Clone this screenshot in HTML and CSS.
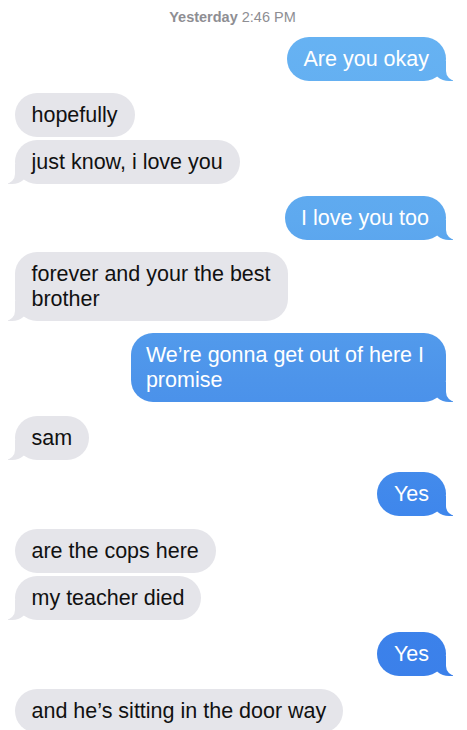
FILE: index.html
```html
<!DOCTYPE html>
<html lang="en">
<head>
<meta charset="utf-8">
<title>Messages</title>
<link rel="stylesheet" href="styles.css">
</head>
<body>
<main class="chat">
  <div class="stamp"><b>Yesterday</b> 2:46 PM</div>

  <div class="msg out tail">Are you okay</div>

  <div class="msg in group">hopefully</div>
  <div class="msg in tail cont">just know, i love you</div>

  <div class="msg out tail">I love you too</div>

  <div class="msg in tail">forever and your the best<br>brother</div>

  <div class="msg out tail wide">We’re gonna get out of here I<br>promise</div>

  <div class="msg in tail apart">sam</div>

  <div class="msg out tail">Yes</div>

  <div class="msg in group loose">are the cops here</div>
  <div class="msg in tail cont">my teacher died</div>

  <div class="msg out tail">Yes</div>

  <div class="msg in loose">and he’s sitting in the door way</div>
</main>
</body>
</html>
```

FILE: styles.css
```css
html, body {
  margin: 0;
  padding: 0;
  background: #ffffff;
  overflow: hidden;
}

.chat {
  display: flex;
  flex-direction: column;
  padding: 7px 21px 0 15px;
  font-family: "Liberation Sans", Arial, sans-serif;
}

.stamp {
  align-self: center;
  margin-left: 4px;
  font-size: 14.5px;
  line-height: 20px;
  color: #8e8e93;
}

.stamp b {
  font-weight: 700;
}

.msg {
  position: relative;
  font-size: 21.5px;
  line-height: 25px;
  padding: 9.5px 17px 9.5px 16.5px;
  border-radius: 22px;
  margin-top: 12px;
  max-width: 340px;
}

.stamp + .msg {
  margin-top: 10px;
}

.msg.cont {
  margin-top: 3px;
}

.msg.apart {
  margin-top: 14px;
}

.msg.loose {
  margin-top: 13px;
}

.msg.in {
  align-self: flex-start;
  background: #e5e5ea;
  color: #111111;
}

.msg.out {
  align-self: flex-end;
  color: #ffffff;
  background: linear-gradient(to bottom, #68b4f3 0px, #5ea9ef 220px, #4d94ea 380px, #3e86ec 520px, #3a7ee9 730px) fixed;
}

.msg.wide {
  padding-left: 15px;
  padding-right: 22px;
}

.msg.tail::before,
.msg.tail::after {
  content: "";
  position: absolute;
  bottom: 0;
  height: 20px;
}

.msg.out.tail::before {
  right: -7px;
  width: 20px;
  background: linear-gradient(to bottom, #68b4f3 0px, #5ea9ef 220px, #4d94ea 380px, #3e86ec 520px, #3a7ee9 730px) fixed;
  border-bottom-left-radius: 16px 14px;
}

.msg.out.tail::after {
  right: -10px;
  width: 10px;
  background: #ffffff;
  border-bottom-left-radius: 10px;
}

.msg.in.tail::before {
  left: -7px;
  width: 20px;
  background: #e5e5ea;
  border-bottom-right-radius: 16px 14px;
}

.msg.in.tail::after {
  left: -10px;
  width: 10px;
  background: #ffffff;
  border-bottom-right-radius: 10px;
}
```
